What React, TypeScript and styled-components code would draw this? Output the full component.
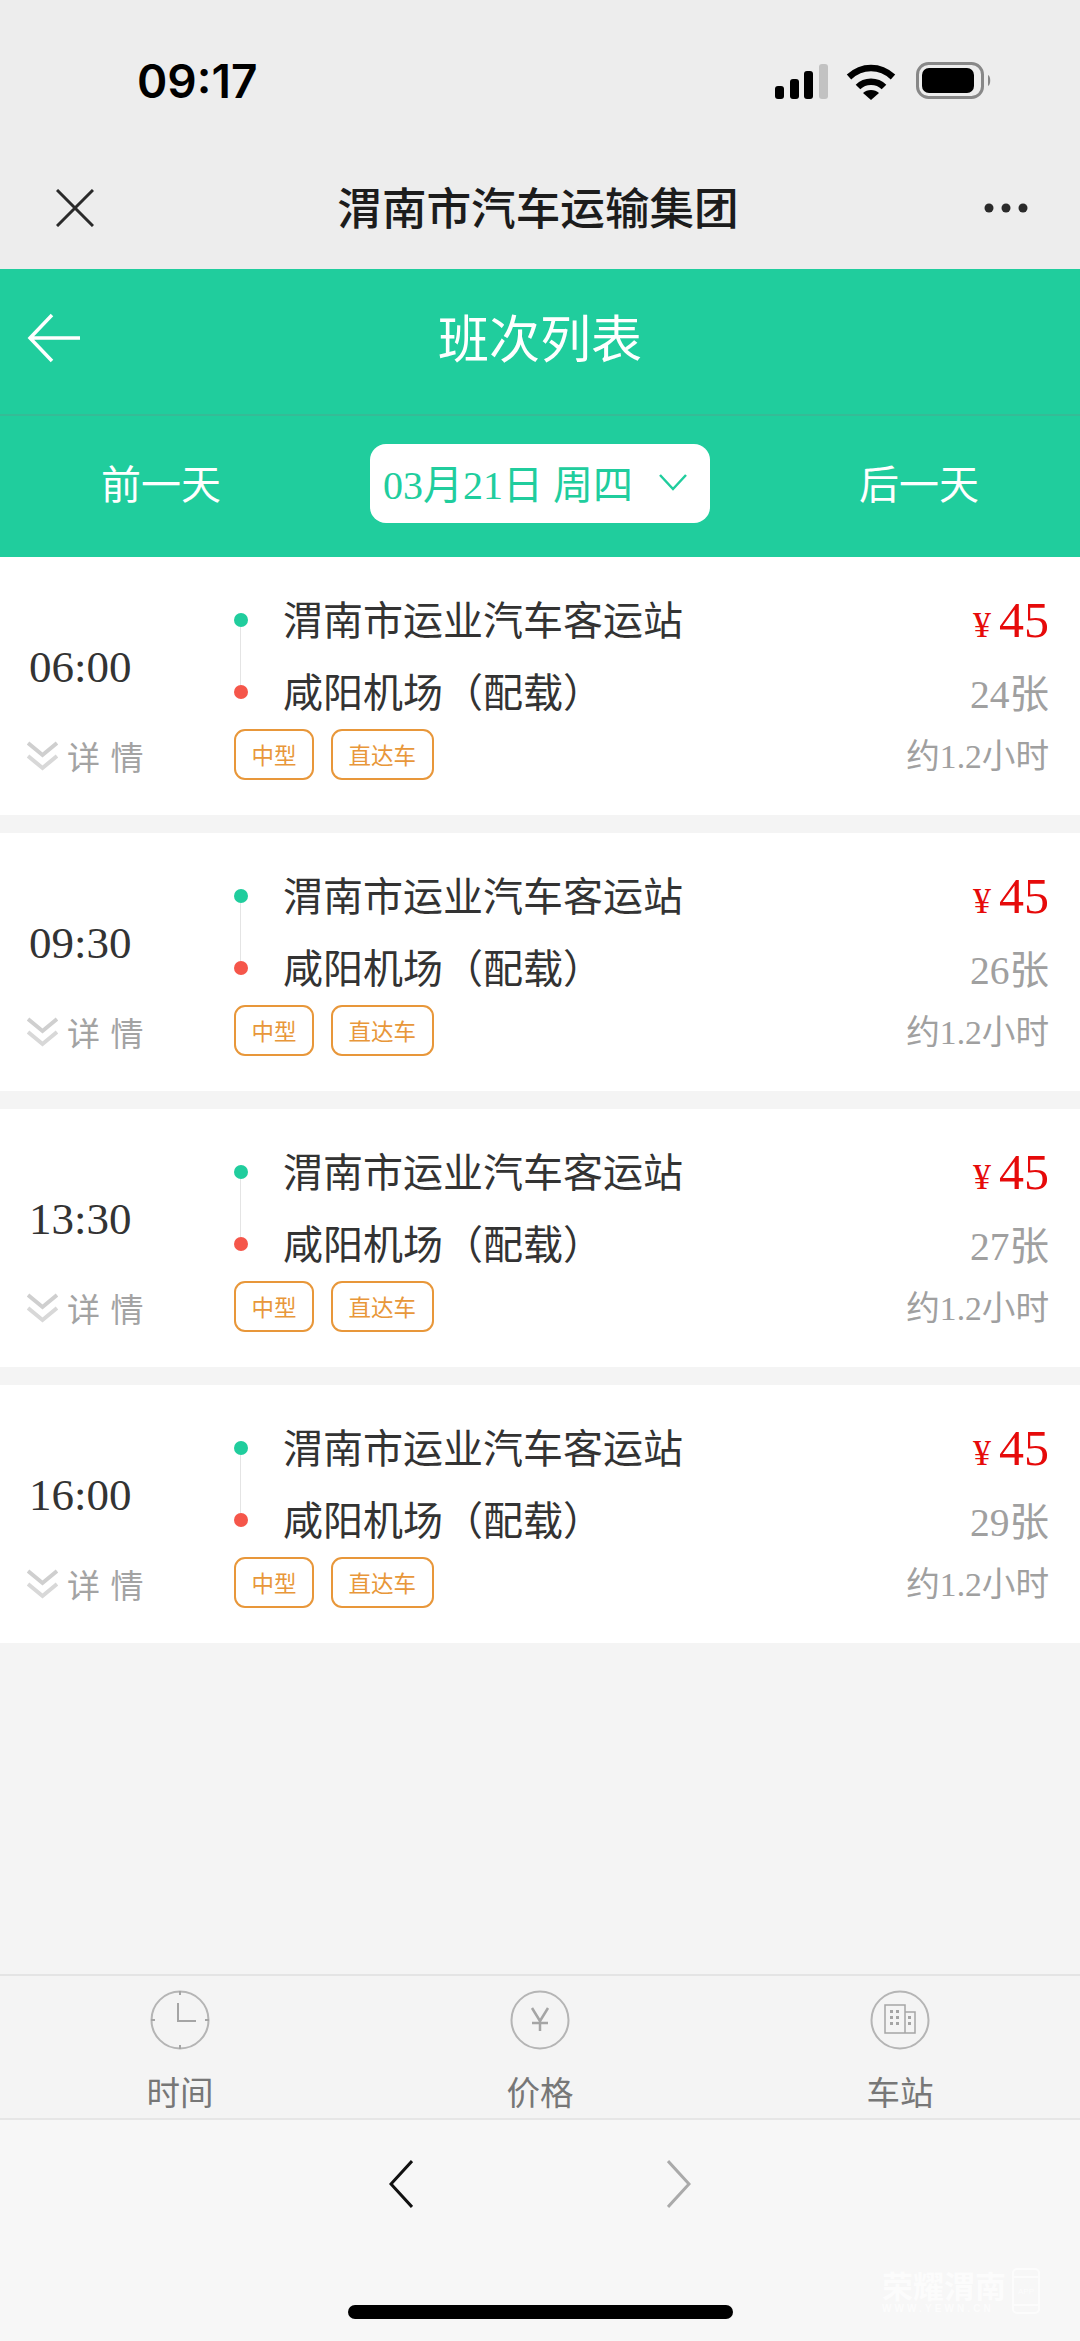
import React from "react";
import styled, { createGlobalStyle } from "styled-components";

const CJK = '"Noto Sans CJK SC", "Noto Sans", sans-serif';
const SERIF = '"Liberation Serif", "Noto Sans CJK SC", serif';
const GREEN = "#20cd9d";

const Global = createGlobalStyle`
  html, body { margin: 0; padding: 0; background: #f4f4f4; }
  * { box-sizing: border-box; }
  #root { width: 1080px; height: 2341px; overflow: hidden; }
`;

const Page = styled.div`
  width: 1080px;
  height: 2341px;
  display: flex;
  flex-direction: column;
  background: #f4f4f4;
  font-family: ${CJK};
`;

const Chrome = styled.div`
  height: 269px;
  background: #ededed;
  display: flex;
  flex-direction: column;
`;

const StatusBar = styled.div`
  height: 150px;
  padding: 54px 89px 0 137px;
  display: flex;
  justify-content: space-between;
  align-items: flex-start;
`;

const Clock = styled.div`
  font-family: Inter, "Liberation Sans", sans-serif;
  font-weight: 600;
  font-size: 46px;
  line-height: 54px;
  color: #000;
`;

const StatusIcons = styled.svg`
  display: block;
  width: 216px;
  height: 40px;
  margin-top: 8px;
`;

const WxBar = styled.div`
  height: 119px;
  padding: 0 52px 0 56px;
  display: flex;
  align-items: flex-start;
  justify-content: space-between;
`;

const WxTitle = styled.div`
  font-size: 44.6px;
  line-height: 60px;
  font-weight: 500;
  color: #1c1c1c;
  white-space: nowrap;
  margin-top: 26px;
  margin-right: 2px;
`;

const WxIcon = styled.svg`
  display: block;
  width: 38px;
  height: 38px;
  margin-top: 39px;
  flex: none;
`;

const WxDots = styled.svg`
  display: block;
  width: 44px;
  height: 12px;
  margin-top: 52px;
  flex: none;
`;

const GreenHead = styled.div`
  height: 288px;
  background: ${GREEN};
  color: #fff;
  display: flex;
  flex-direction: column;
`;

const TitleRow = styled.div`
  height: 147px;
  border-bottom: 2px solid #35bb96;
  display: grid;
  grid-template-columns: 1fr auto 1fr;
  align-items: center;
  padding-bottom: 12px;
`;

const BackIcon = styled.svg`
  display: block;
  width: 54px;
  height: 50px;
  margin-left: 27px;
  margin-top: 4px;
`;

const PageTitle = styled.div`
  font-size: 51px;
  line-height: 70px;
  font-weight: 400;
`;

const DateRow = styled.div`
  flex: 1;
  display: grid;
  grid-template-columns: 370px 340px 370px;
  align-items: center;
  padding-bottom: 10px;
`;

const DayLink = styled.div<{ $side: "left" | "right" }>`
  font-size: 40px;
  line-height: 56px;
  text-align: center;
  padding-${(p) => p.$side}: 48px;
`;

const DatePill = styled.div`
  height: 79px;
  margin-top: 4px;
  background: #fff;
  border-radius: 16px;
  padding: 0 0 3px 13px;
  display: flex;
  align-items: center;
  font-family: ${SERIF};
  font-size: 40px;
  color: ${GREEN};
  white-space: pre;
`;

const PillChevron = styled.svg`
  display: block;
  width: 30px;
  height: 18px;
  margin-left: 25px;
`;

const List = styled.div`
  flex: 1;
  display: flex;
  flex-direction: column;
  gap: 18px;
`;

const Card = styled.div`
  height: 258px;
  background: #fff;
  display: grid;
  grid-template-columns: 234px 1fr auto;
  padding-right: 31px;
`;

const LeftCol = styled.div`
  padding: 84px 0 0 29px;
`;

const TimeText = styled.div`
  font-family: ${SERIF};
  font-size: 45px;
  line-height: 52px;
  color: #333;
`;

const Detail = styled.div`
  margin-top: 41px;
  margin-left: -2px;
  display: flex;
  align-items: center;
  gap: 9px;
  font-size: 33px;
  line-height: 44px;
  color: #a3a3a3;
  letter-spacing: 1.5px;
  white-space: pre;
`;

const DetailIcon = styled.svg`
  display: block;
  width: 31px;
  height: 30px;
`;

const MidCol = styled.div`
  padding-top: 27px;
`;

const Stop = styled.div`
  height: 72px;
  position: relative;
  display: flex;
  align-items: center;
  font-size: 40px;
  color: #333;
  white-space: nowrap;
`;

const StopName = styled.span`
  margin-top: -4px;
`;

const Dot = styled.span<{ $color: string; $line?: boolean }>`
  width: 14px;
  height: 14px;
  margin-right: 35px;
  border-radius: 50%;
  background: ${(p) => p.$color};
  flex: none;
  position: relative;
  ${(p) =>
    p.$line
      ? `&::after {
    content: "";
    position: absolute;
    left: 6px;
    top: 14px;
    width: 1px;
    height: 58px;
    background: #e4e4e4;
  }`
      : ""}
`;

const Tags = styled.div`
  display: flex;
  gap: 17px;
  margin-top: 1px;
`;

const Tag = styled.div`
  height: 51px;
  padding: 0 15.5px;
  border: 2px solid #e8973a;
  border-radius: 11px;
  font-size: 22.5px;
  line-height: 46px;
  color: #e8973a;
`;

const RightCol = styled.div`
  padding-top: 27px;
  display: flex;
  flex-direction: column;
  align-items: flex-end;
  font-family: ${SERIF};
`;

const Price = styled.div`
  height: 72px;
  display: flex;
  align-items: center;
  font-size: 50px;
  color: #e60a0a;
`;

const Yen = styled.span`
  font-size: 36px;
  margin-right: 8px;
  position: relative;
  top: 5px;
`;

const Seats = styled.div`
  height: 72px;
  margin-top: -2px;
  display: flex;
  align-items: center;
  font-size: 39.5px;
  color: #a0a0a0;
`;

const Duration = styled.div`
  margin-top: 2px;
  height: 51px;
  display: flex;
  align-items: center;
  font-size: 33.6px;
  color: #a0a0a0;
`;

const TabBar = styled.div`
  height: 146px;
  border-top: 2px solid #e4e4e4;
  border-bottom: 2px solid #e6e6e6;
  display: grid;
  grid-template-columns: repeat(3, 1fr);
`;

const TabItem = styled.div`
  padding-top: 14px;
  display: flex;
  flex-direction: column;
  align-items: center;
`;

const TabIcon = styled.svg`
  display: block;
  width: 60px;
  height: 60px;
`;

const TabLabel = styled.div`
  margin-top: 18px;
  font-size: 33.5px;
  line-height: 46px;
  color: #777;
`;

const Bottom = styled.div`
  height: 221px;
  background: #f7f7f7;
  position: relative;
  display: flex;
  flex-direction: column;
  align-items: center;
`;

const NavArrows = styled.div`
  margin-top: 40px;
  display: flex;
  gap: 254px;
`;

const NavArrow = styled.svg`
  display: block;
  width: 24px;
  height: 48px;
`;

const HomeBar = styled.div`
  margin-top: 97px;
  width: 385px;
  height: 14px;
  border-radius: 7px;
  background: #000;
`;

const Watermark = styled.div`
  position: absolute;
  left: 882px;
  top: 148px;
  color: #fff;
  display: flex;
  gap: 5px;
  opacity: 0.7;
`;

const WmText = styled.div`
  display: flex;
  flex-direction: column;
  width: 125px;
`;

const WmName = styled.div`
  font-size: 31px;
  line-height: 34px;
  font-weight: 700;
  white-space: nowrap;
`;

const WmUrl = styled.div`
  font-family: "Liberation Sans", sans-serif;
  font-size: 10px;
  font-weight: 700;
  line-height: 14px;
  letter-spacing: 3.1px;
  white-space: nowrap;
`;

const WmPhone = styled.svg`
  display: block;
  width: 28px;
  height: 46px;
`;

const trips = [
  { time: "06:00", seats: 24 },
  { time: "09:30", seats: 26 },
  { time: "13:30", seats: 27 },
  { time: "16:00", seats: 29 },
];

export default function App() {
  return (
    <Page>
      <Global />
      <Chrome>
        <StatusBar>
          <Clock>09:17</Clock>
          <StatusIcons viewBox="0 0 216 40" fill="none">
            <rect x="0" y="24" width="9" height="13" rx="3" fill="#000" />
            <rect x="15" y="17" width="9" height="20" rx="3" fill="#000" />
            <rect x="29" y="9" width="9" height="28" rx="3" fill="#000" />
            <rect x="44" y="2" width="9" height="35" rx="3" fill="#c2c2c2" />
            <path d="M74 15 C87 3 105 3 118 15" stroke="#000" strokeWidth="6.5" />
            <path d="M83 25 C90 18 102 18 109 25" stroke="#000" strokeWidth="6.5" />
            <path d="M88 31 C92 27 100 27 104 31 L96 38 Z" fill="#000" />
            <rect x="142.5" y="1.5" width="65" height="34" rx="11" stroke="#888" strokeWidth="3" />
            <rect x="147" y="6" width="52" height="25" rx="7" fill="#000" />
            <path d="M213 13 C216 14 216 23 213 24 Z" fill="#888" />
          </StatusIcons>
        </StatusBar>
        <WxBar>
          <WxIcon viewBox="0 0 38 38" fill="none">
            <path d="M1 1 L37 37 M37 1 L1 37" stroke="#2a2a2a" strokeWidth="3" />
          </WxIcon>
          <WxTitle>渭南市汽车运输集团</WxTitle>
          <WxDots viewBox="0 0 44 12" fill="#2a2a2a">
            <circle cx="5" cy="6" r="4.5" />
            <circle cx="22" cy="6" r="4.5" />
            <circle cx="39" cy="6" r="4.5" />
          </WxDots>
        </WxBar>
      </Chrome>
      <GreenHead>
        <TitleRow>
          <BackIcon viewBox="0 0 54 50" fill="none">
            <path d="M25 2 L3 25 L25 48 M3 25 H53" stroke="#fff" strokeWidth="3.5" />
          </BackIcon>
          <PageTitle>班次列表</PageTitle>
        </TitleRow>
        <DateRow>
          <DayLink $side="right">前一天</DayLink>
          <DatePill>
            03月21日 周四
            <PillChevron viewBox="0 0 30 18" fill="none">
              <path d="M2 2 L15 16 L28 2" stroke={GREEN} strokeWidth="2.5" />
            </PillChevron>
          </DatePill>
          <DayLink $side="left">后一天</DayLink>
        </DateRow>
      </GreenHead>
      <List>
        {trips.map((t) => (
          <Card key={t.time}>
            <LeftCol>
              <TimeText>{t.time}</TimeText>
              <Detail>
                <DetailIcon viewBox="0 0 31 30" fill="none">
                  <path d="M1 2 L15.5 14 L30 2" stroke="#cfcfcf" strokeWidth="4" />
                  <path d="M1 15 L15.5 27 L30 15" stroke="#d8d8d8" strokeWidth="4" />
                </DetailIcon>
                详 情
              </Detail>
            </LeftCol>
            <MidCol>
              <Stop>
                <Dot $color={GREEN} $line />
                <StopName>渭南市运业汽车客运站</StopName>
              </Stop>
              <Stop>
                <Dot $color="#f5564a" />
                <StopName>咸阳机场（配载）</StopName>
              </Stop>
              <Tags>
                <Tag>中型</Tag>
                <Tag>直达车</Tag>
              </Tags>
            </MidCol>
            <RightCol>
              <Price>
                <Yen>¥</Yen>45
              </Price>
              <Seats>{t.seats}张</Seats>
              <Duration>约1.2小时</Duration>
            </RightCol>
          </Card>
        ))}
      </List>
      <TabBar>
        <TabItem>
          <TabIcon viewBox="0 0 60 60" fill="none">
            <circle cx="30" cy="30" r="28.5" stroke="#b5b5b5" strokeWidth="2" />
            <path d="M30 1 V5 M30 55 V59 M1 30 H5 M55 30 H59" stroke="#a5a5a5" strokeWidth="2" />
            <path d="M28 13 V31 H46" stroke="#a5a5a5" strokeWidth="2" />
          </TabIcon>
          <TabLabel>时间</TabLabel>
        </TabItem>
        <TabItem>
          <TabIcon viewBox="0 0 60 60" fill="none">
            <circle cx="30" cy="30" r="28.5" stroke="#b5b5b5" strokeWidth="2" />
            <path d="M22 18 L30 31 L38 18 M30 31 V41 M22 33 H38" stroke="#a5a5a5" strokeWidth="2.5" />
          </TabIcon>
          <TabLabel>价格</TabLabel>
        </TabItem>
        <TabItem>
          <TabIcon viewBox="0 0 60 60" fill="none">
            <circle cx="30" cy="30" r="28.5" stroke="#b5b5b5" strokeWidth="2" />
            <path d="M15 15 H35 V43 H15 Z M35 22 H45 V43 H35" stroke="#a5a5a5" strokeWidth="1.5" />
            <path
              d="M20 20 h3 v3 h-3 Z M26 20 h3 v3 h-3 Z M20 26 h3 v3 h-3 Z M26 26 h3 v3 h-3 Z M20 32 h3 v3 h-3 Z M26 32 h3 v3 h-3 Z M38 26 h3 v3 h-3 Z M38 32 h3 v3 h-3 Z"
              fill="#a5a5a5"
            />
          </TabIcon>
          <TabLabel>车站</TabLabel>
        </TabItem>
      </TabBar>
      <Bottom>
        <NavArrows>
          <NavArrow viewBox="0 0 24 48" fill="none">
            <path d="M23 1 L2 24 L23 47" stroke="#111" strokeWidth="3" />
          </NavArrow>
          <NavArrow viewBox="0 0 24 48" fill="none">
            <path d="M1 1 L22 24 L1 47" stroke="#aaa" strokeWidth="3" />
          </NavArrow>
        </NavArrows>
        <HomeBar />
        <Watermark>
          <WmText>
            <WmName>荣耀渭南</WmName>
            <WmUrl>WWW.YEWN.CN</WmUrl>
          </WmText>
          <WmPhone viewBox="0 0 28 46" fill="none">
            <rect x="1" y="1" width="26" height="44" rx="4" stroke="#fff" strokeWidth="2" />
            <path d="M1 9 H27 M1 37 H27" stroke="#fff" strokeWidth="2" />
            <text x="14" y="26" textAnchor="middle" fontSize="8" fill="#fff" fontFamily="Liberation Sans">APP</text>
          </WmPhone>
        </Watermark>
      </Bottom>
    </Page>
  );
}
